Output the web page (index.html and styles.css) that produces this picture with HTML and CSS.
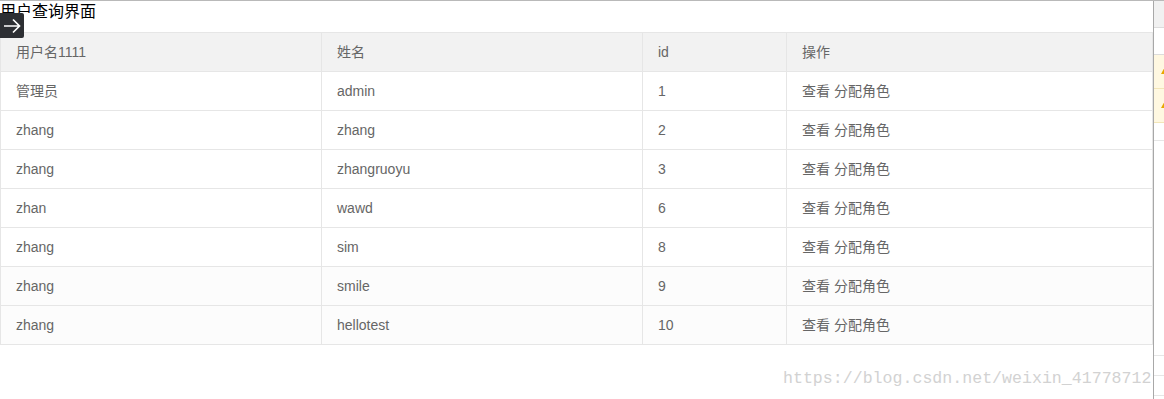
FILE: index.html
```html
<!DOCTYPE html>
<html lang="zh">
<head>
<meta charset="utf-8">
<title>用户查询界面</title>
<link rel="stylesheet" href="styles.css">
</head>
<body>
<div class="frame">
  <main class="main">
    <h1 class="title">用户查询界面</h1>
    <div class="toggle">
      <svg width="24" height="25" viewBox="0 0 24 25"><path d="M4 13H19.5M13 6.5L19.5 13L13 19.5" fill="none" stroke="#fff" stroke-width="1.7"/></svg>
    </div>
    <table class="grid">
      <colgroup><col class="c1"><col class="c2"><col class="c3"><col class="c4"></colgroup>
      <thead>
        <tr><th>用户名1111</th><th>姓名</th><th>id</th><th>操作</th></tr>
      </thead>
      <tbody>
        <tr><td>管理员</td><td>admin</td><td>1</td><td>查看 分配角色</td></tr>
        <tr><td>zhang</td><td>zhang</td><td>2</td><td>查看 分配角色</td></tr>
        <tr><td>zhang</td><td>zhangruoyu</td><td>3</td><td>查看 分配角色</td></tr>
        <tr><td>zhan</td><td>wawd</td><td>6</td><td>查看 分配角色</td></tr>
        <tr><td>zhang</td><td>sim</td><td>8</td><td>查看 分配角色</td></tr>
        <tr class="soft"><td>zhang</td><td>smile</td><td>9</td><td>查看 分配角色</td></tr>
        <tr class="soft"><td>zhang</td><td>hellotest</td><td>10</td><td>查看 分配角色</td></tr>
      </tbody>
    </table>
  </main>
  <div class="divider"></div>
  <aside class="side">
    <div class="side-head"></div>
    <div class="side-blank"></div>
    <div class="side-warn"><span class="tri"></span></div>
    <div class="side-warn"><span class="tri"></span></div>
    <div class="side-rest"></div>
  </aside>
</div>
<div class="watermark">https://blog.csdn.net/weixin_41778712</div>
</body>
</html>
```

FILE: styles.css
```css
html, body {
  margin: 0;
  padding: 0;
  background: #fff;
}
body {
  width: 1164px;
  height: 399px;
  overflow: hidden;
  position: relative;
  font-family: "Liberation Sans", "Noto Sans CJK SC", sans-serif;
}
.frame {
  display: flex;
  border-top: 1px solid #b9b9b9;
  height: 398px;
}
.main {
  width: 1153px;
  position: relative;
}
.title {
  margin: 0 0 9px 0;
  font-size: 16px;
  font-weight: normal;
  line-height: 22px;
  color: #000;
}
.toggle {
  position: absolute;
  left: 0;
  top: 12px;
  width: 24px;
  height: 25px;
  background: #2d2f33;
  border-radius: 0 2px 2px 0;
}
.toggle svg { display: block; }
.grid {
  border-collapse: collapse;
  table-layout: fixed;
  width: 1152px;
  font-size: 14px;
  color: #666;
}
.c1 { width: 321px; }
.c2 { width: 321px; }
.c3 { width: 144px; }
.c4 { width: 366px; }
.grid th, .grid td {
  border: 1px solid #e6e6e6;
  padding: 9px 15px;
  line-height: 20px;
  text-align: left;
  font-weight: normal;
  white-space: nowrap;
}
.grid thead tr { background: #f2f2f2; }
.grid tr.soft { background: #fcfcfc; }
.divider {
  width: 1px;
  background: #a8a8a8;
}
.side {
  flex: 1;
  display: flex;
  flex-direction: column;
}
.side-head {
  height: 26px;
  background: #f1f1f1;
  border-bottom: 1px solid #dcdcdc;
}
.side-blank {
  height: 26px;
  border-bottom: 1px solid #dcdcdc;
}
.side-warn {
  height: 33px;
  background: #fff8e1;
  border-bottom: 1px solid #f3e6b8;
  position: relative;
}
.tri {
  position: absolute;
  left: 7px;
  top: 10px;
  width: 0;
  height: 0;
  border-left: 5px solid transparent;
  border-right: 5px solid transparent;
  border-bottom: 9px solid #e8a800;
}
.side-rest {
  flex: 1;
  background:
    linear-gradient(#e6e6e6, #e6e6e6) 0 17px / 100% 1px no-repeat,
    linear-gradient(#e6e6e6, #e6e6e6) 0 232px / 100% 1px no-repeat,
    linear-gradient(#e6e6e6, #e6e6e6) 0 252px / 100% 1px no-repeat,
    linear-gradient(#e6e6e6, #e6e6e6) 0 272px / 100% 1px no-repeat;
}
.watermark {
  position: absolute;
  left: 783px;
  top: 368px;
  font-family: "Liberation Mono", monospace;
  font-size: 16.6px;
  line-height: 22px;
  color: #d2d2d2;
  white-space: nowrap;
}
```
